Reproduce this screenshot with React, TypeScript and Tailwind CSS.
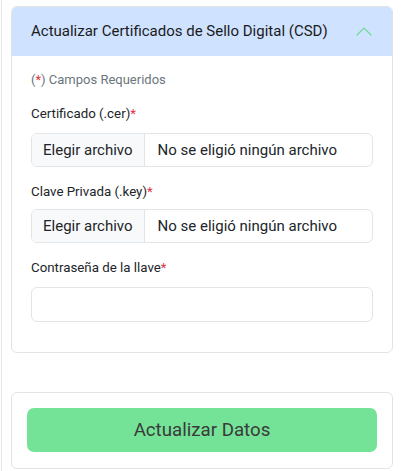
export default function App() {
  const req = <span className="text-[#dc3545]">*</span>;
  return (
    <div className="min-h-[471px] bg-white font-['Roboto',sans-serif] text-[#212529]">
      <div className="ml-[1px] min-h-[471px] border-l border-[#e5e5e5] pl-[9px] pr-[9px] pt-[6px]">
        {/* Card CSD */}
        <div className="overflow-hidden rounded-[6px] border border-[#e3e3e3] bg-white">
          <div className="flex h-[49px] items-center justify-between bg-[#cfe2ff] pl-[19px] pr-[16px]">
            <span className="text-[15px] text-[#1b1b1b]">Actualizar Certificados de Sello Digital (CSD)</span>
            <svg width="16" height="9" viewBox="0 0 16 9" fill="none" className="mr-[4px]">
              <path d="M0.5 8.5 L8 1 L15.5 8.5" stroke="#6fdc93" strokeWidth="1.2" />
            </svg>
          </div>
          <div className="px-[19px] pt-[14px] pb-[30px]">
            <p className="text-[13px] leading-[20px] text-[#6c757d]">({req}) Campos Requeridos</p>

            <label className="mt-[14px] block text-[13.3px] leading-[20px]">Certificado (.cer){req}</label>
            <div className="mt-[9px] flex h-[34px] overflow-hidden rounded-[6px] border border-[#e2e5e8] text-[15px]">
              <span className="flex items-center border-r border-[#e2e5e8] bg-[#f8f9fa] px-[11px]">Elegir archivo</span>
              <span className="flex items-center px-[13px]">No se eligió ningún archivo</span>
            </div>

            <label className="mt-[15px] block text-[13.3px] leading-[20px]">Clave Privada (.key){req}</label>
            <div className="mt-[7px] flex h-[34px] overflow-hidden rounded-[6px] border border-[#e2e5e8] text-[15px]">
              <span className="flex items-center border-r border-[#e2e5e8] bg-[#f8f9fa] px-[11px]">Elegir archivo</span>
              <span className="flex items-center px-[13px]">No se eligió ningún archivo</span>
            </div>

            <label className="mt-[15px] block text-[13.3px] leading-[20px]">Contraseña de la llave{req}</label>
            <input
              type="password"
              className="mt-[9px] block h-[35px] w-full rounded-[6px] border border-[#e2e5e8] px-[12px] outline-none"
            />
          </div>
        </div>

        {/* Card botón */}
        <div className="mt-[39px] rounded-[6px] border border-[#e3e3e3] bg-white px-[15px] pt-[15px] pb-[16px]">
          <button className="h-[44px] w-full rounded-[7px] bg-[#75e397] text-[18.7px] text-[#3a3a3a]">
            Actualizar Datos
          </button>
        </div>
      </div>
    </div>
  );
}
